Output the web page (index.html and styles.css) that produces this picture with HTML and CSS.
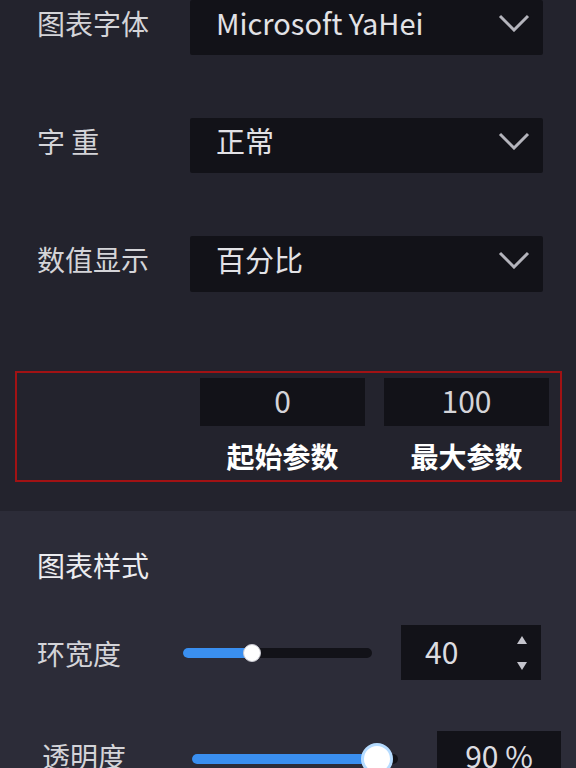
FILE: index.html
```html
<!DOCTYPE html>
<html lang="zh-CN">
<head>
    <meta charset="UTF-8">
    <meta name="viewport" content="width=device-width, initial-scale=1.0">
    <title>图表设置</title>
    <link rel="stylesheet" href="styles.css">
</head>
<body>
    <div class="settings">
        <div class="form-row">
            <span class="label">图表字体</span>
            <div class="select">
                <span>Microsoft YaHei</span>
                <svg class="arrow" viewBox="0 0 32 18"><path d="M2 2 L16 16 L30 2"/></svg>
            </div>
        </div>
        <div class="form-row">
            <span class="label">字&nbsp;重</span>
            <div class="select">
                <span>正常</span>
                <svg class="arrow" viewBox="0 0 32 18"><path d="M2 2 L16 16 L30 2"/></svg>
            </div>
        </div>
        <div class="form-row">
            <span class="label">数值显示</span>
            <div class="select">
                <span>百分比</span>
                <svg class="arrow" viewBox="0 0 32 18"><path d="M2 2 L16 16 L30 2"/></svg>
            </div>
        </div>
        <div class="range-box">
            <div class="range-item">
                <div class="range-input">0</div>
                <div class="range-label">起始参数</div>
            </div>
            <div class="range-item">
                <div class="range-input">100</div>
                <div class="range-label">最大参数</div>
            </div>
        </div>
    </div>
    <div class="style-panel">
        <h3 class="panel-title">图表样式</h3>
        <div class="slider-row">
            <span class="label">环宽度</span>
            <div class="slider">
                <div class="slider-fill" style="width: 69px"></div>
                <div class="slider-thumb"></div>
            </div>
            <div class="number-input">
                <span>40</span>
                <div class="spin">
                    <svg viewBox="0 0 10 8"><path d="M5 0 L10 8 L0 8 Z"/></svg>
                    <svg viewBox="0 0 10 8"><path d="M0 0 L10 0 L5 8 Z"/></svg>
                </div>
            </div>
        </div>
        <div class="slider-row opacity-row">
            <span class="label">透明度</span>
            <div class="slider">
                <div class="slider-fill" style="width: 185px"></div>
                <div class="slider-thumb"></div>
            </div>
            <div class="number-input">
                <span>90 %</span>
            </div>
        </div>
    </div>
</body>
</html>
```

FILE: styles.css
```css
body {
    margin: 0;
    background: #2c2c38;
    color: #d8d8dc;
    font-family: "Microsoft YaHei", "Noto Sans CJK SC", sans-serif;
    font-size: 28px;
    width: 576px;
    height: 768px;
    overflow: hidden;
}
.settings {
    background: #23232d;
    height: 511px;
    box-sizing: border-box;
    overflow: hidden;
}
.form-row {
    display: flex;
    align-items: center;
    height: 55px;
    padding: 0 33px 0 37px;
    margin-bottom: 63px;
}
.form-row:nth-child(3) {
    height: 56px;
    margin-bottom: 0;
}
.label {
    width: 153px;
    flex-shrink: 0;
    line-height: 40px;
    margin-top: -10px;
    color: #d4d4d8;
}
.select {
    flex: 1;
    height: 100%;
    background: #121218;
    border-radius: 2px;
    display: flex;
    align-items: center;
    justify-content: space-between;
    padding: 0 13px 0 26px;
    box-sizing: border-box;
    color: #e2e2e6;
}
.select span {
    margin-top: -11px;
    font-size: 29px;
}
.arrow {
    width: 32px;
    height: 18px;
    margin-top: -9px;
    fill: none;
    stroke: #b4b4bc;
    stroke-width: 3;
}
.range-box {
    margin: 79px 14px 0 15px;
    border: 2px solid #a11214;
    padding: 5px 10px 6px 183px;
    display: flex;
    gap: 19px;
}
.range-item {
    width: 165px;
    text-align: center;
}
.range-input {
    height: 48px;
    line-height: 44px;
    background: #121218;
    font-size: 30px;
    color: #d4d4d8;
}
.range-label {
    margin-top: 12px;
    line-height: 36px;
    color: #ffffff;
    font-weight: bold;
}
.style-panel {
    padding-top: 34px;
}
.panel-title {
    margin: 0 0 40px 37px;
    font-size: 28px;
    font-weight: normal;
    line-height: 40px;
    color: #ececf0;
}
.slider-row {
    display: flex;
    align-items: center;
    height: 55px;
    padding-left: 37px;
    margin-bottom: 51px;
}
.slider-row .label {
    width: 146px;
    margin-top: 0;
}
.slider {
    position: relative;
    width: 189px;
    height: 10px;
    border-radius: 5px;
    background: #121218;
    margin-right: 29px;
}
.slider-fill {
    height: 100%;
    border-radius: 5px;
    background: #3a8ff0;
}
.slider-thumb {
    position: absolute;
    top: 50%;
    left: 69px;
    width: 18px;
    height: 18px;
    margin: -9px 0 0 -9px;
    border-radius: 50%;
    background: #ffffff;
    box-sizing: border-box;
    border: 1px solid #c8c8d0;
}
.number-input {
    width: 140px;
    height: 55px;
    background: #121218;
    display: flex;
    align-items: center;
    justify-content: space-between;
    padding: 0 14px 0 24px;
    box-sizing: border-box;
    font-size: 30px;
    color: #dcdce0;
}
.number-input span {
    margin-top: -4px;
}
.spin {
    display: flex;
    flex-direction: column;
    gap: 18px;
}
.spin svg {
    width: 10px;
    height: 8px;
    fill: #c4c4cc;
}
.opacity-row {
    padding-left: 42px;
}
.opacity-row .label {
    width: 150px;
    margin-top: -6px;
}
.opacity-row .slider {
    width: 206px;
    margin-right: 39px;
}
.opacity-row .slider-thumb {
    left: 185px;
    width: 32px;
    height: 32px;
    margin: -16px 0 0 -16px;
    border: 3px solid #b6dcff;
}
.opacity-row .number-input {
    width: 124px;
    justify-content: center;
    padding: 0;
}
.opacity-row .number-input span {
    margin-top: -8px;
}
```
